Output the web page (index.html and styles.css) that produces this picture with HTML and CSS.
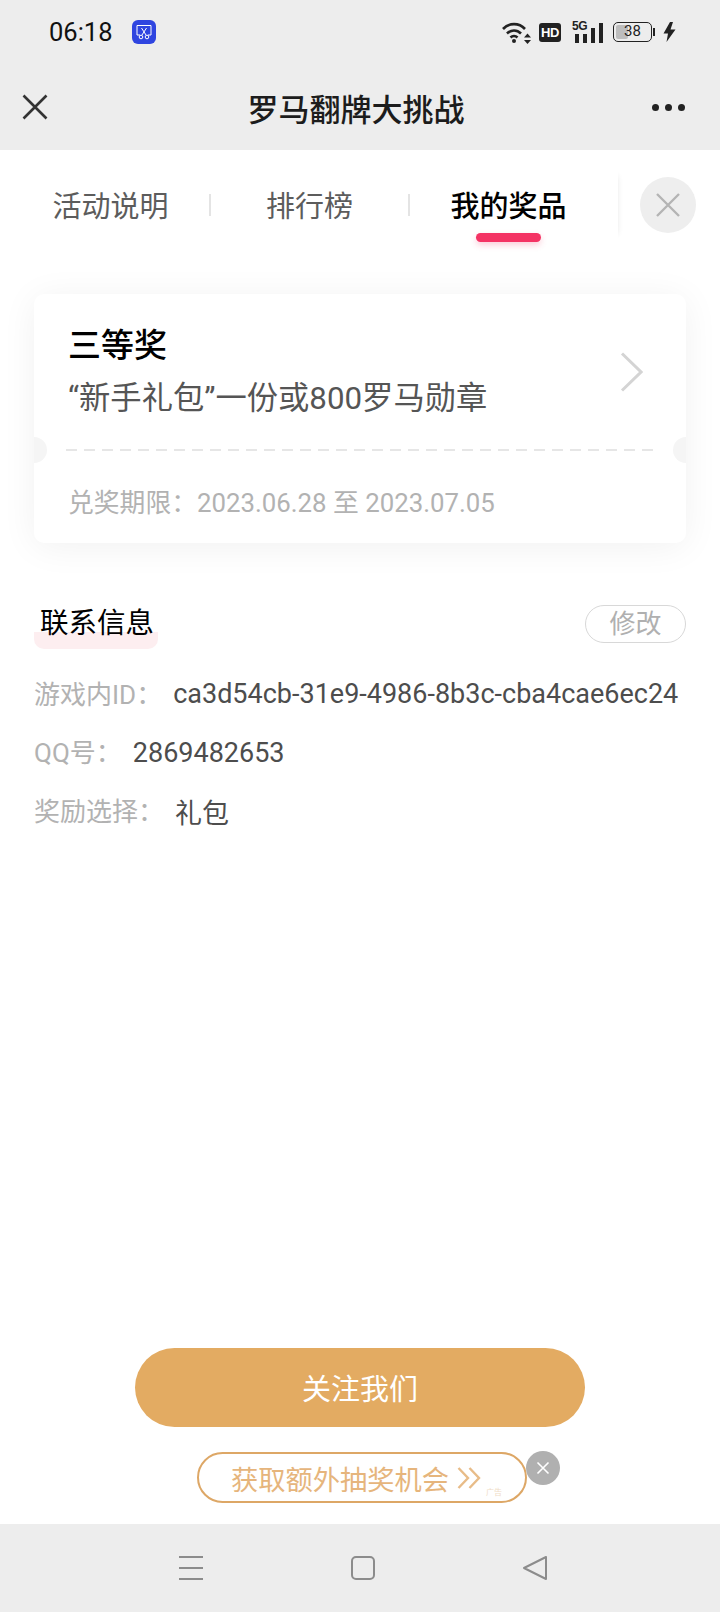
FILE: index.html
```html
<!DOCTYPE html>
<html lang="zh-CN">
<head>
    <meta charset="UTF-8">
    <meta name="viewport" content="width=device-width, initial-scale=1.0">
    <title>罗马翻牌大挑战</title>
    <link rel="stylesheet" href="styles.css">
</head>
<body>
    <div class="phone">
        <header class="top-area">
            <div class="status-bar">
                <div class="status-left">
                    <span class="time">06:18</span>
                    <span class="app-badge">
                        <svg width="16" height="16" viewBox="0 0 16 16" fill="none" stroke="#fff" stroke-width="1">
                            <path d="M4 11H1V1.500H15V11H12"/>
                            <path d="M5.500 4L10 11M10.500 4L6 11"/>
                            <circle cx="5" cy="13" r="1.800"/>
                            <circle cx="11" cy="13" r="1.800"/>
                        </svg>
                    </span>
                </div>
                <div class="status-right">
                    <svg class="wifi" width="29" height="23" viewBox="0 0 29 23" fill="none" stroke="#222" stroke-width="2.600">
                        <path d="M1 8C7 1.500 17 1.500 23 8"/>
                        <path d="M5 12.500C9 8.500 15 8.500 19 12.500"/>
                        <path d="M8.500 16.500C10.500 14.500 13.500 14.500 15.500 16.500"/>
                        <circle cx="12" cy="20" r="2" fill="#222" stroke="none"/>
                        <path d="M25.500 12.500L29 16.500H22Z" fill="#222" stroke="none"/>
                        <path d="M25.500 23L29 19H22Z" fill="#222" stroke="none"/>
                    </svg>
                    <span class="hd-badge">HD</span>
                    <div class="signal">
                        <span class="signal-label">5G</span>
                        <div class="signal-bars">
                            <i class="bar-1"></i>
                            <i class="bar-2"></i>
                            <i class="bar-3"></i>
                            <i class="bar-4"></i>
                        </div>
                    </div>
                    <div class="battery">
                        <div class="battery-body">
                            <div class="battery-fill"></div>
                            <span class="battery-text">38</span>
                        </div>
                        <div class="battery-nub"></div>
                    </div>
                    <svg class="bolt" width="13" height="20" viewBox="0 0 13 20">
                        <path d="M7 0L0.500 11.500H5L3.500 20L12.500 7.500H7.500L10 0Z" fill="#222"/>
                    </svg>
                </div>
            </div>
            <div class="title-bar">
                <svg class="title-close" width="26" height="26" viewBox="0 0 26 26" fill="none" stroke="#333" stroke-width="2.600">
                    <path d="M1.500 1.500L24.500 24.500M24.500 1.500L1.500 24.500"/>
                </svg>
                <h1 class="page-title">罗马翻牌大挑战</h1>
                <div class="more-dots"><i></i><i></i><i></i></div>
            </div>
        </header>

        <main class="main">
            <nav class="tabs">
                <div class="tab-list">
                    <a class="tab">活动说明</a>
                    <span class="tab-sep"></span>
                    <a class="tab">排行榜</a>
                    <span class="tab-sep"></span>
                    <a class="tab tab-active">我的奖品</a>
                </div>
                <button class="tab-close" type="button">
                    <svg width="24" height="24" viewBox="0 0 24 24" fill="none" stroke="#b4b4b4" stroke-width="2.400">
                        <path d="M1 1L23 23M23 1L1 23"/>
                    </svg>
                </button>
            </nav>

            <section class="prize-card">
                <div class="prize-top">
                    <div class="prize-info">
                        <p class="prize-level">三等奖</p>
                        <p class="prize-name">“新手礼包”一份或800罗马勋章</p>
                    </div>
                    <svg class="prize-arrow" width="23" height="40" viewBox="0 0 23 40" fill="none" stroke="#d4d4d4" stroke-width="3">
                        <path d="M2 1.500L21 20L2 38.500"/>
                    </svg>
                </div>
                <div class="prize-line"></div>
                <div class="prize-bottom">兑奖期限：2023.06.28 至 2023.07.05</div>
            </section>

            <section class="contact">
                <div class="contact-head">
                    <h2 class="contact-title">联系信息</h2>
                    <button class="edit-btn" type="button">修改</button>
                </div>
                <div class="info-row">
                    <span class="info-label">游戏内ID：</span>
                    <span class="info-value">ca3d54cb-31e9-4986-8b3c-cba4cae6ec24</span>
                </div>
                <div class="info-row">
                    <span class="info-label">QQ号：</span>
                    <span class="info-value">2869482653</span>
                </div>
                <div class="info-row">
                    <span class="info-label">奖励选择：</span>
                    <span class="info-value">礼包</span>
                </div>
            </section>

            <div class="actions">
                <button class="follow-btn" type="button">关注我们</button>
                <div class="ad-banner">
                    <span class="ad-text">获取额外抽奖机会</span>
                    <svg width="24" height="22" viewBox="0 0 24 22" fill="none" stroke="#e8bc88" stroke-width="2.400">
                        <path d="M1.500 1L11 11L1.500 21M12.500 1L22 11L12.500 21"/>
                    </svg>
                    <span class="ad-tag">广告</span>
                    <span class="ad-close">
                        <svg width="14" height="14" viewBox="0 0 14 14" fill="none" stroke="#fff" stroke-width="1.600">
                            <path d="M1.500 1.500L12.500 12.500M12.500 1.500L1.500 12.500"/>
                        </svg>
                    </span>
                </div>
            </div>
        </main>

        <footer class="nav-bar">
            <div class="nav-menu"><i></i><i></i><i></i></div>
            <div class="nav-home"></div>
            <svg width="24" height="24" viewBox="0 0 24 24" fill="none" stroke="#8c8c8c" stroke-width="2" stroke-linejoin="round">
                <path d="M23 1V23L1 12Z"/>
            </svg>
        </footer>
    </div>
</body>
</html>
```

FILE: styles.css
```css
*{
    margin: 0;
    padding: 0;
    box-sizing: border-box;
}
body {
    font-family: Roboto, "Noto Sans CJK SC", sans-serif;
    background-color: #fff;
}
button {
    font-family: inherit;
    border: none;
    background: none;
}
.phone {
    width: 720px;
    height: 1612px;
    display: flex;
    flex-direction: column;
    overflow: hidden;
}

/* status bar + title */
.top-area {
    height: 150px;
    background-color: #ededed;
}
.status-bar {
    height: 64px;
    padding: 0 44px 0 49px;
    display: flex;
    justify-content: space-between;
    align-items: center;
}
.status-left {
    display: flex;
    align-items: center;
    column-gap: 19px;
}
.time {
    font-size: 25.500px;
    color: #111;
}
.app-badge {
    width: 24px;
    height: 24px;
    border-radius: 6px;
    background-color: #2f45e0;
    display: flex;
    align-items: center;
    justify-content: center;
}
.status-right {
    display: flex;
    align-items: center;
}
.hd-badge {
    width: 22px;
    height: 19px;
    margin-left: 8px;
    border-radius: 3px;
    background-color: #222;
    color: #fff;
    font-family: "Liberation Sans", sans-serif;
    font-size: 13px;
    font-weight: bold;
    line-height: 19px;
    text-align: center;
    letter-spacing: -0.5px;
}
.signal {
    width: 31px;
    height: 21px;
    margin-left: 11px;
    position: relative;
}
.signal-label {
    position: absolute;
    left: 0;
    top: -1px;
    font-family: "Liberation Sans", sans-serif;
    font-size: 12px;
    font-weight: bold;
    line-height: 11px;
    letter-spacing: -0.5px;
    color: #222;
}
.signal-bars {
    height: 21px;
    padding-left: 3px;
    display: flex;
    align-items: flex-end;
    column-gap: 4px;
}
.signal-bars i {
    width: 4px;
    background-color: #222;
}
.bar-1 { height: 9px; }
.bar-2 { height: 9px; }
.bar-3 { height: 15px; }
.bar-4 { height: 20px; }
.battery {
    margin-left: 10px;
    display: flex;
    align-items: center;
    column-gap: 1px;
}
.battery-body {
    width: 39px;
    height: 20px;
    border: 1.5px solid #222;
    border-radius: 5px;
    padding: 2px;
    position: relative;
}
.battery-fill {
    width: 12px;
    height: 100%;
    border-radius: 2px;
    background-color: #bdbdbd;
}
.battery-text {
    position: absolute;
    left: 0;
    right: 0;
    top: 0;
    font-size: 15px;
    line-height: 17px;
    text-align: center;
    color: #222;
}
.battery-nub {
    width: 2px;
    height: 8px;
    background-color: #222;
}
.bolt {
    margin-left: 8px;
}
.title-bar {
    height: 86px;
    padding: 0 35px 0 22px;
    display: flex;
    align-items: center;
    justify-content: space-between;
    position: relative;
}
.page-title {
    position: absolute;
    left: 0;
    right: 0;
    top: 21px;
    padding-right: 8px;
    text-align: center;
    font-size: 31px;
    font-weight: 500;
    color: #1c1c1c;
}
.more-dots {
    display: flex;
    column-gap: 6px;
}
.more-dots i {
    width: 7px;
    height: 7px;
    border-radius: 50%;
    background-color: #222;
}

/* tabs */
.main {
    flex: 1;
    display: flex;
    flex-direction: column;
}
.tabs {
    height: 120px;
    padding-bottom: 10px;
    display: flex;
    align-items: center;
}
.tab-list {
    width: 618px;
    height: 70px;
    padding-left: 12px;
    box-shadow: 5px 0 6px -6px rgba(0, 0, 0, 0.12);
    display: flex;
    align-items: center;
}
.tab {
    width: 197px;
    padding-bottom: 3px;
    text-align: center;
    font-size: 29px;
    color: #5c5c5c;
    position: relative;
}
.tab-sep {
    width: 2px;
    height: 22px;
    background-color: #e4e4e4;
}
.tab-active {
    color: #000;
    font-weight: 500;
}
.tab-active::after {
    content: "";
    position: absolute;
    left: 66px;
    top: 50px;
    width: 65px;
    height: 9px;
    border-radius: 5px;
    background-color: #f43364;
    box-shadow: 0 3px 6px rgba(244, 51, 100, 0.25);
}
.tab-close {
    width: 56px;
    height: 56px;
    margin-left: 22px;
    border-radius: 50%;
    background-color: #eee;
    display: flex;
    align-items: center;
    justify-content: center;
}

/* prize card */
.prize-card {
    margin: 24px 34px 0;
    height: 249px;
    border-radius: 10px;
    background-color: #fff;
    box-shadow: 0 4px 36px rgba(0, 0, 0, 0.06);
    position: relative;
}
.prize-card::before,
.prize-card::after {
    content: "";
    position: absolute;
    top: 143px;
    width: 13px;
    height: 26px;
    background-color: #f5f5f5;
}
.prize-card::before {
    left: 0;
    border-radius: 0 13px 13px 0;
}
.prize-card::after {
    right: 0;
    border-radius: 13px 0 0 13px;
}
.prize-top {
    height: 155px;
    padding: 32px 33px 0 34px;
    display: flex;
    justify-content: space-between;
}
.prize-level {
    font-size: 33px;
    font-weight: 500;
    line-height: 40px;
    color: #000;
}
.prize-name {
    margin-top: 12px;
    font-size: 31.300px;
    line-height: 42px;
    color: #555;
}
.prize-arrow {
    margin-top: 26px;
    margin-right: 10px;
}
.prize-line {
    height: 2px;
    margin: 0 33px 0 32px;
    background-image: repeating-linear-gradient(to right, #e6e6e6 0, #e6e6e6 11px, transparent 11px, transparent 18px);
}
.prize-bottom {
    padding: 34px 0 0 34px;
    font-size: 25.800px;
    line-height: 36px;
    color: #b2b2b2;
}

/* contact info */
.contact {
    margin: 62px 34px 0;
}
.contact-head {
    height: 38px;
    display: flex;
    justify-content: space-between;
    align-items: flex-start;
    margin-bottom: 22px;
}
.contact-title {
    width: 124px;
    height: 44px;
    padding-left: 6px;
    font-size: 28.500px;
    font-weight: 400;
    line-height: 38px;
    color: #000;
    position: relative;
    z-index: 0;
}
.contact-title::after {
    content: "";
    position: absolute;
    z-index: -1;
    left: 0;
    bottom: 0;
    width: 100%;
    height: 17px;
    border-radius: 0 0 10px 10px;
    background-color: #fdeef0;
}
.edit-btn {
    width: 101px;
    height: 38px;
    border: 1px solid #d8d8d8;
    border-radius: 19px;
    font-size: 26px;
    line-height: 34px;
    color: #b0b0b0;
}
.info-row {
    height: 58.500px;
    display: flex;
    align-items: center;
    font-size: 26px;
}
.info-label {
    margin-bottom: 4px;
    color: #b2b2b2;
}
.info-value {
    color: #4d4d4d;
    margin-left: 11px;
    font-size: 27px;
}

/* buttons */
.actions {
    margin-top: auto;
    padding-bottom: 21px;
    display: flex;
    flex-direction: column;
    align-items: center;
}
.follow-btn {
    width: 450px;
    height: 79px;
    padding-bottom: 2px;
    border-radius: 40px;
    background-color: #e3ab62;
    color: #fff;
    font-size: 29px;
}
.ad-banner {
    width: 330px;
    height: 51px;
    margin-top: 25px;
    margin-left: 4px;
    padding-left: 32px;
    border: 2px solid #dda766;
    border-radius: 26px;
    display: flex;
    align-items: center;
    column-gap: 8px;
    position: relative;
}
.ad-text {
    font-size: 27.250px;
    color: #e6b57c;
}
.ad-tag {
    position: absolute;
    left: 287px;
    top: 34px;
    font-size: 8px;
    line-height: 10px;
    color: #efdcc6;
}
.ad-close {
    position: absolute;
    left: 327px;
    top: -3px;
    width: 34px;
    height: 34px;
    border-radius: 50%;
    background-color: #b0b0b0;
    display: flex;
    align-items: center;
    justify-content: center;
}

/* nav bar */
.nav-bar {
    height: 88px;
    background-color: #ededed;
    padding: 32px 173px 0 179px;
    display: flex;
    justify-content: space-between;
    align-items: flex-start;
}
.nav-menu {
    width: 24px;
    height: 24px;
    display: flex;
    flex-direction: column;
    justify-content: space-between;
}
.nav-menu i {
    height: 2px;
    background-color: #8c8c8c;
}
.nav-home {
    width: 24px;
    height: 24px;
    border: 2px solid #8c8c8c;
    border-radius: 5px;
}
```
